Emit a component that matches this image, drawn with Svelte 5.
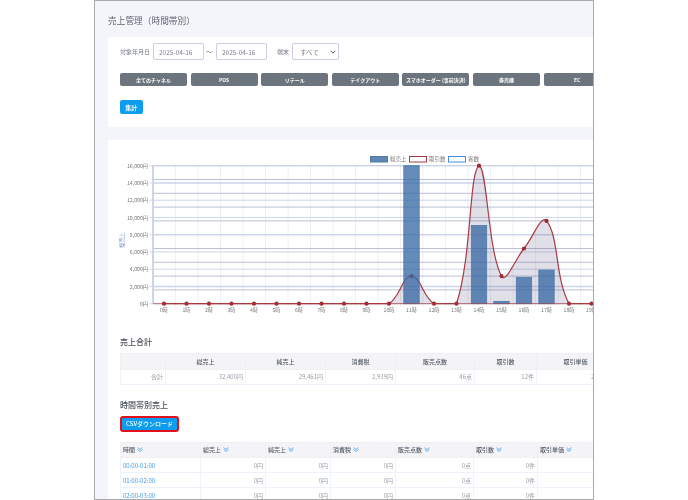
<script lang="ts">
	const channels = ['全てのチャネル', 'POS', 'リテール', 'テイクアウト', 'スマホオーダー (事前決済)', '券売機', 'EC'];

	// chart geometry, in page pixels
	const left = 153;
	const top = 165.7;
	const bottom = 303.7;
	const right = 594;
	const hourW = 22.5;
	const hourX = (h: number) => 164 + h * hourW;

	const sales = [0, 0, 0, 0, 0, 0, 0, 0, 0, 0, 0, 16000, 0, 0, 9070, 270, 3060, 3900, 0, 0];
	const counts = [0, 0, 0, 0, 0, 0, 0, 0, 0, 0, 0, 1, 0, 0, 5, 1, 2, 3, 0, 0];
	const yLabels = ['16,000円', '14,000円', '12,000円', '10,000円', '8,000円', '6,000円', '4,000円', '2,000円', '0円'];

	const salesY = (v: number) => bottom - (v / 16000) * (bottom - top);
	const countY = (v: number) => bottom - (v / 5) * (bottom - top);

	const points = counts.map((c, h) => ({ x: hourX(h), y: countY(c) }));

	// same spline as chart.js, tension 0.4
	function curve(pts: { x: number; y: number }[]) {
		const t = 0.4;
		const ctrl = pts.map((p, i) => {
			const a = pts[Math.max(i - 1, 0)];
			const b = pts[Math.min(i + 1, pts.length - 1)];
			const d01 = Math.hypot(p.x - a.x, p.y - a.y);
			const d12 = Math.hypot(b.x - p.x, b.y - p.y);
			const s = d01 + d12 || 1;
			return {
				px: p.x - (t * d01 * (b.x - a.x)) / s,
				py: Math.min(bottom, Math.max(top, p.y - (t * d01 * (b.y - a.y)) / s)),
				nx: p.x + (t * d12 * (b.x - a.x)) / s,
				ny: Math.min(bottom, Math.max(top, p.y + (t * d12 * (b.y - a.y)) / s))
			};
		});
		let d = `M${pts[0].x} ${pts[0].y}`;
		for (let i = 1; i < pts.length; i++) {
			d += `C${ctrl[i - 1].nx} ${ctrl[i - 1].ny} ${ctrl[i].px} ${ctrl[i].py} ${pts[i].x} ${pts[i].y}`;
		}
		return d;
	}

	const linePath = curve(points);
	const areaPath = `${linePath}L${points[points.length - 1].x} ${bottom}L${points[0].x} ${bottom}Z`;

	const summaryCols = [
		{ label: '', width: 45, value: '合計' },
		{ label: '総売上', width: 80, value: '32,400円' },
		{ label: '純売上', width: 80, value: '29,461円' },
		{ label: '消費税', width: 70, value: '2,939円' },
		{ label: '販売点数', width: 79, value: '46点' },
		{ label: '取引数', width: 62, value: '12件' },
		{ label: '取引単価', width: 78, value: '2,700円' }
	];

	const hourCols = [
		{ label: '時間', width: 80 },
		{ label: '総売上', width: 65 },
		{ label: '純売上', width: 65 },
		{ label: '消費税', width: 65 },
		{ label: '販売点数', width: 78 },
		{ label: '取引数', width: 64 },
		{ label: '取引単価', width: 77 }
	];
	const hourRows = ['00:00-01:00', '01:00-02:00', '02:00-03:00'];
	const hourVals = ['0円', '0円', '0円', '0点', '0件', ''];
</script>

<div class="frame">
	<h1 class="title">売上管理（時間帯別）</h1>

	<section class="card filters">
		<div class="filter-row">
			<span class="label">対象年月日</span>
			<input class="field date" value="2025-04-16" />
			<span class="label tilde">～</span>
			<input class="field date" value="2025-04-16" />
			<span class="label device">端末</span>
			<div class="field select">
				<span>すべて</span>
				<svg width="6" height="4" viewBox="0 0 6 4"><path d="M.7.8 3 3.2 5.3.8" fill="none" stroke="#555" stroke-width="1" /></svg>
			</div>
		</div>
		<div class="channels">
			{#each channels as c}
				<button class="channel">{c}</button>
			{/each}
		</div>
		<button class="submit">集計</button>
	</section>

	<section class="card report">
		<svg class="chart" width="486" height="175" viewBox="108 145 486 175">
			<!-- legend -->
			<rect x="370.5" y="156.5" width="17" height="5.5" fill="#6187b5" stroke="#4f79ab" />
			<text class="legend" x="390" y="161">総売上</text>
			<rect x="409.5" y="156.5" width="17" height="5.5" fill="#fff" stroke="#a83a42" />
			<text class="legend" x="429" y="161">取引数</text>
			<rect x="448.5" y="156.5" width="17" height="5.5" fill="#fff" stroke="#3f8fe0" />
			<text class="legend" x="468" y="161">客数</text>

			<!-- vertical grid -->
			{#each { length: 20 } as _, i}
				<line x1={left + hourW * (i + 1)} x2={left + hourW * (i + 1)} y1={top} y2="307" stroke="#ececf0" stroke-width="0.8" />
			{/each}

			<!-- count axis grid -->
			{#each { length: 10 } as _, i}
				<line x1={left} x2={right} y1={top + 13.8 * i} y2={top + 13.8 * i} stroke="#b4b8d2" stroke-width="0.9" />
			{/each}

			<!-- sales axis grid -->
			{#each yLabels as label, i}
				{@const y = top + 17.25 * i}
				<line x1={left} x2={right} y1={y} y2={y} stroke="#c9d5ea" stroke-width={i === 1 || i === 7 ? 1.6 : 1} />
				<line x1="149" x2={left} y1={y} y2={y} stroke="#ccc" stroke-width="0.7" />
				<text class="tick" x="148" y={y + 2.2} text-anchor="end">{label}</text>
			{/each}
			<line x1={left} x2={left} y1={top} y2={bottom} stroke="#ccd6e8" stroke-width="2" />
			<text class="axis" transform="translate(124 240) rotate(-90)" text-anchor="middle">総売上</text>

			<!-- 取引数 -->
			<path d={areaPath} fill="rgba(88, 80, 130, 0.18)" />
			<path d={linePath} fill="none" stroke="#a83a42" stroke-width="1.2" />
			{#each points as p}
				<circle cx={p.x} cy={p.y} r="2.1" fill="#a3282f" />
			{/each}

			<!-- 総売上 -->
			{#each sales as v, h}
				{#if v > 0}
					<rect
						x={hourX(h) - 7.7}
						y={salesY(v)}
						width="15.4"
						height={bottom - salesY(v)}
						fill="rgba(58, 106, 164, 0.78)"
						stroke="#4f79ab"
						stroke-width="0.8"
					/>
				{/if}
			{/each}

			<line x1={left} x2={right} y1={bottom} y2={bottom} stroke="#a83a42" stroke-width="0.7" />
			{#each { length: 20 } as _, h}
				<text class="tick" x={hourX(h)} y="312" text-anchor="middle">{h}時</text>
			{/each}
		</svg>

		<h2 class="heading">売上合計</h2>
		<table class="grid summary">
			<colgroup>
				{#each summaryCols as col}
					<col style="width:{col.width}px" />
				{/each}
			</colgroup>
			<thead>
				<tr>
					{#each summaryCols as col}
						<th class="center">{col.label}</th>
					{/each}
				</tr>
			</thead>
			<tbody>
				<tr>
					{#each summaryCols as col}
						<td>{col.value}</td>
					{/each}
				</tr>
			</tbody>
		</table>

		<h2 class="heading second">時間帯別売上</h2>
		<button class="csv">CSVダウンロード</button>

		<table class="grid hours">
			<colgroup>
				{#each hourCols as col}
					<col style="width:{col.width}px" />
				{/each}
			</colgroup>
			<thead>
				<tr>
					{#each hourCols as col}
						<th>
							{col.label}
							<svg class="sort" width="6" height="5" viewBox="0 0 6 5">
								<path d="M.6.6 3 2.4 5.4.6M.6 2.6 3 4.4 5.4 2.6" fill="none" stroke="#62b3f2" stroke-width="1" />
							</svg>
						</th>
					{/each}
				</tr>
			</thead>
			<tbody>
				{#each hourRows as row}
					<tr>
						<td class="link">{row}</td>
						{#each hourVals as val}
							<td>{val}</td>
						{/each}
					</tr>
				{/each}
			</tbody>
		</table>
	</section>
</div>

<style>
	:global(body) {
		margin: 0;
		background: #fff;
		font-family: 'Noto Sans CJK JP', 'Noto Sans', sans-serif;
	}

	/* the reference is a scaled-down capture, hence the slight softness */
	.frame {
		box-sizing: border-box;
		width: 500px;
		height: 500px;
		margin-left: 94px;
		padding-left: 13px;
		background: #f4f5fa;
		border: 1px solid #aaa;
		overflow: hidden;
		filter: blur(0.3px);
	}

	.title {
		margin: 0;
		padding: 12px 0 9px;
		height: 15px;
		line-height: 15px;
		font-size: 8.7px;
		font-weight: 400;
		color: #5f6570;
	}

	.card {
		background: #fff;
		margin-bottom: 13px;
	}

	.filters {
		box-sizing: border-box;
		height: 90px;
		padding: 6px 0 0 12px;
	}

	.filter-row {
		display: flex;
		align-items: center;
		height: 17px;
	}

	.label {
		font-size: 6px;
		color: #777c88;
		margin-right: 3px;
		white-space: nowrap;
	}

	.tilde {
		margin: 0 2px;
		width: 8px;
	}

	.device {
		margin: 0 3px 0 10px;
	}

	.field {
		box-sizing: border-box;
		height: 17px;
		border: 1px solid #c9cee2;
		border-radius: 2px;
		background: #fff;
		font: 6.5px 'Noto Sans CJK JP', 'Noto Sans', sans-serif;
		color: #80858f;
	}

	.date {
		width: 51px;
		padding: 0 0 0 5px;
	}

	.select {
		display: flex;
		align-items: center;
		justify-content: space-between;
		width: 47px;
		padding: 0 2px 0 7px;
	}

	.channels {
		display: flex;
		gap: 3.6px;
		width: 520px;
		margin-top: 13px;
	}

	.channel {
		flex: none;
		width: 67px;
		height: 13px;
		padding: 0;
		border: 0;
		border-radius: 2px;
		background: #6c757d;
		color: #fff;
		font: 700 5px 'Noto Sans CJK JP', 'Noto Sans', sans-serif;
		white-space: nowrap;
	}

	.submit {
		display: block;
		width: 22.5px;
		height: 14px;
		margin-top: 14px;
		padding: 0;
		border: 0;
		border-radius: 2px;
		background: #0d9cee;
		color: #fff;
		font: 700 6px 'Noto Sans CJK JP', 'Noto Sans', sans-serif;
	}

	.report {
		box-sizing: border-box;
		height: 400px;
		padding: 5px 0 0 12px;
	}

	.chart {
		display: block;
		margin-left: -12px;
	}

	.chart text {
		font-family: 'Noto Sans CJK JP', 'Noto Sans', sans-serif;
	}

	.legend {
		font-size: 5.5px;
		fill: #777;
	}

	.tick {
		font-size: 5.2px;
		fill: #777;
	}

	.axis {
		font-size: 5.2px;
		fill: #6f8fbf;
	}

	.heading {
		margin: 15px 0 4px;
		height: 14px;
		line-height: 14px;
		font-size: 8px;
		font-weight: 500;
		color: #4a4f58;
	}

	.second {
		margin: 13px 0 4px;
	}

	.csv {
		display: block;
		box-sizing: border-box;
		width: 59px;
		height: 16px;
		padding: 0;
		border: 2px solid #e0101c;
		border-radius: 3px;
		background: #0d9cee;
		color: #fff;
		font: 500 6px 'Noto Sans CJK JP', 'Noto Sans', sans-serif;
		white-space: nowrap;
	}

	.grid {
		table-layout: fixed;
		width: 494px;
		border-collapse: collapse;
		font-size: 6px;
	}

	.grid th,
	.grid td {
		box-sizing: border-box;
		height: 15px;
		padding: 0 2px;
		border: 1px solid #eef2fa;
		white-space: nowrap;
		overflow: hidden;
	}

	.grid th {
		height: 15.5px;
		background: #f4f4f6;
		border-color: #f0f0f3;
		color: #555b66;
		font-weight: 500;
		text-align: left;
	}

	.grid th.center {
		text-align: center;
	}

	.grid td {
		text-align: right;
		color: #9a9ea8;
	}

	.grid td.link {
		text-align: left;
		color: #3a9be8;
	}

	.sort {
		margin-left: 1px;
	}

	.hours {
		margin-top: 10px;
	}
</style>
